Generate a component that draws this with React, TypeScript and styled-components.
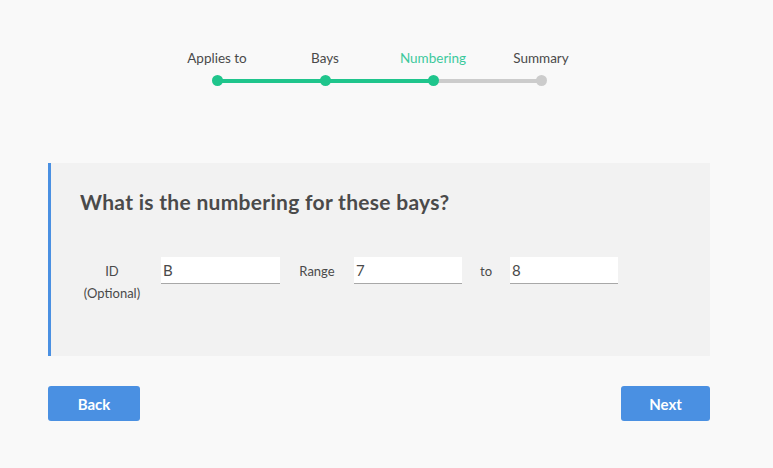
import React from "react";
import styled, { createGlobalStyle } from "styled-components";

const GlobalStyle = createGlobalStyle`
  html, body {
    margin: 0;
    padding: 0;
    background: #f9f9f9;
    font-family: Lato, "Open Sans", sans-serif;
  }
`;

const Page = styled.div`
  width: 662px;
  margin-left: 48px;
  padding-top: 50px;
`;

const Stepper = styled.div`
  display: flex;
  justify-content: center;
`;

const Step = styled.div`
  width: 108px;
  display: flex;
  flex-direction: column;
  align-items: center;
`;

const StepLabel = styled.div<{ $active?: boolean }>`
  font-size: 13.5px;
  line-height: 16px;
  color: ${({ $active }) => ($active ? "#3cc99c" : "#4a4a4a")};
`;

const Track = styled.div`
  position: relative;
  width: 100%;
  height: 12px;
  margin-top: 9px;
`;

const Line = styled.div<{ $side: "left" | "right"; $done: boolean }>`
  position: absolute;
  top: 4px;
  height: 4px;
  width: 50%;
  ${({ $side }) => ($side === "left" ? "left: 0;" : "right: 0;")}
  background: ${({ $done }) => ($done ? "#1fc58c" : "#cccccc")};
`;

const Dot = styled.div<{ $done: boolean }>`
  position: absolute;
  left: 50%;
  top: 0;
  width: 11px;
  height: 11px;
  margin-left: -5.5px;
  border-radius: 50%;
  background: ${({ $done }) => ($done ? "#1fc58c" : "#cccccc")};
`;

const Panel = styled.section`
  margin-top: 76px;
  background: #f2f2f2;
  border-left: 3px solid #4a90e2;
  height: 193px;
  box-sizing: border-box;
  padding: 26px 29px;
`;

const Heading = styled.h2`
  margin: 0;
  font-size: 21px;
  letter-spacing: 0.3px;
  font-weight: 700;
  color: #4a4a4a;
  line-height: 26px;
`;

const Fields = styled.div`
  display: flex;
  align-items: flex-start;
  margin-top: 42px;
`;

const FieldLabel = styled.div<{ $width: number; $gap?: number }>`
  width: ${({ $width }) => $width}px;
  margin-right: ${({ $gap }) => $gap ?? 0}px;
  text-align: center;
  font-size: 13px;
  line-height: 22px;
  color: #4a4a4a;
  padding-top: 3px;
`;

const Input = styled.input<{ $width: number }>`
  width: ${({ $width }) => $width}px;
  height: 27px;
  box-sizing: border-box;
  border: none;
  border-bottom: 1px solid #a8a8a8;
  background: #ffffff;
  padding: 0 2px;
  font-family: Lato, "Open Sans", sans-serif;
  font-size: 15px;
  color: #4a4a4a;
  outline: none;
`;

const Footer = styled.div`
  display: flex;
  justify-content: space-between;
  margin-top: 30px;
`;

const Button = styled.button<{ $width: number }>`
  width: ${({ $width }) => $width}px;
  height: 35px;
  border: none;
  border-radius: 3px;
  background: #4a90e2;
  color: #ffffff;
  font-family: Lato, "Open Sans", sans-serif;
  font-size: 15px;
  font-weight: 700;
  cursor: pointer;
`;

const steps = ["Applies to", "Bays", "Numbering", "Summary"];
const current = 2;

export default function App() {
  return (
    <>
      <GlobalStyle />
      <Page>
        <Stepper>
          {steps.map((s, i) => (
            <Step key={s}>
              <StepLabel $active={i === current}>{s}</StepLabel>
              <Track>
                {i > 0 && <Line $side="left" $done={i <= current} />}
                {i < steps.length - 1 && <Line $side="right" $done={i < current} />}
                <Dot $done={i <= current} />
              </Track>
            </Step>
          ))}
        </Stepper>
        <Panel>
          <Heading>What is the numbering for these bays?</Heading>
          <Fields>
            <FieldLabel $width={64} $gap={17}>
              ID
              <br />
              (Optional)
            </FieldLabel>
            <Input $width={119} defaultValue="B" />
            <FieldLabel $width={74}>Range</FieldLabel>
            <Input $width={108} defaultValue="7" />
            <FieldLabel $width={48}>to</FieldLabel>
            <Input $width={108} defaultValue="8" />
          </Fields>
        </Panel>
        <Footer>
          <Button $width={92}>Back</Button>
          <Button $width={89}>Next</Button>
        </Footer>
      </Page>
    </>
  );
}
